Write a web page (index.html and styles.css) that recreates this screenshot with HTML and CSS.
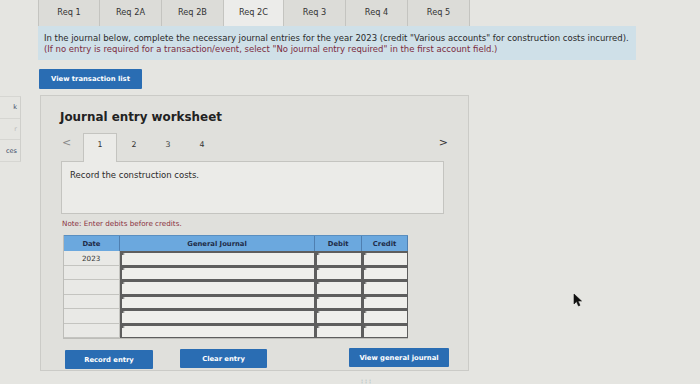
FILE: index.html
```html
<!DOCTYPE html>
<html>
<head>
<meta charset="utf-8">
<link rel="stylesheet" href="styles.css">
</head>
<body>
<div class="page">
  <div class="top">
    <div class="tabs">
      <div class="tab">Req 1</div>
      <div class="tab">Req 2A</div>
      <div class="tab">Req 2B</div>
      <div class="tab active">Req 2C</div>
      <div class="tab">Req 3</div>
      <div class="tab">Req 4</div>
      <div class="tab">Req 5</div>
    </div>
    <div class="instructions">
      <p class="line1">In the journal below, complete the necessary journal entries for the year 2023 (credit "Various accounts" for construction costs incurred).</p>
      <p class="line2">(If no entry is required for a transaction/event, select "No journal entry required" in the first account field.)</p>
    </div>
    <button class="btn btn-view">View transaction list</button>
  </div>

  <div class="lower">
    <div class="sidebar">
      <div class="side-item">k</div>
      <div class="side-item">r</div>
      <div class="side-item">ces</div>
    </div>

    <div class="panel">
      <h1 class="title">Journal entry worksheet</h1>
      <div class="pager">
        <span class="arrow">&lt;</span>
        <div class="ptab active">1</div>
        <div class="ptab">2</div>
        <div class="ptab">3</div>
        <div class="ptab">4</div>
        <span class="arrow right">&gt;</span>
      </div>
      <div class="content">Record the construction costs.</div>
      <div class="note">Note: Enter debits before credits.</div>

      <div class="table">
        <div class="row head">
          <div class="c date">Date</div>
          <div class="c gj">General Journal</div>
          <div class="c dr">Debit</div>
          <div class="c cr">Credit</div>
        </div>
        <div class="row"><div class="c date">2023</div><div class="c in gj"></div><div class="c in dr"></div><div class="c in cr"></div></div>
        <div class="row"><div class="c date"></div><div class="c in gj"></div><div class="c in dr"></div><div class="c in cr"></div></div>
        <div class="row"><div class="c date"></div><div class="c in gj"></div><div class="c in dr"></div><div class="c in cr"></div></div>
        <div class="row"><div class="c date"></div><div class="c in gj"></div><div class="c in dr"></div><div class="c in cr"></div></div>
        <div class="row"><div class="c date"></div><div class="c in gj"></div><div class="c in dr"></div><div class="c in cr"></div></div>
        <div class="row"><div class="c date"></div><div class="c in gj"></div><div class="c in dr"></div><div class="c in cr"></div></div>
      </div>

      <div class="actions">
        <button class="btn btn-record">Record entry</button>
        <button class="btn btn-clear">Clear entry</button>
        <button class="btn btn-general">View general journal</button>
      </div>
    </div>
  </div>
  <div class="dots">&#8942;&#8942;&#8942;</div>
</div>
<svg class="cursor" width="10" height="14" viewBox="0 0 10 14"><path d="M1 1 L1 11 L3.5 8.5 L5.5 13 L7 12.3 L5 8 L8.5 8 Z" fill="#111" stroke="#111" stroke-width="0.6"/></svg>
</body>
</html>
```

FILE: styles.css
```css
* { box-sizing: border-box; }
html, body { margin: 0; padding: 0; }
body {
  width: 700px;
  height: 384px;
  overflow: hidden;
  background: #e5e5e1;
  font-family: "DejaVu Sans", Verdana, sans-serif;
  color: #2c2c2c;
  position: relative;
}
.page { width: 700px; height: 384px; }
.top { padding-left: 38px; }
.tabs { display: flex; height: 26px; }
.tab {
  width: 62px;
  height: 26px;
  background: #dcdcd8;
  border-right: 1px solid #c4c4c0;
  font-size: 8.2px;
  display: flex;
  align-items: center;
  justify-content: center;
  padding-bottom: 3px;
  color: #333;
}
.tab:first-child { border-left: 1px solid #c4c4c0; }
.tab.active { background: #ececea; width: 60px; }
.instructions {
  width: 598px;
  background: #cfe0e8;
  padding: 7px 4px 5px 6px;
  font-size: 8.5px;
  line-height: 11px;
}
.instructions p { margin: 0; white-space: nowrap; }
.line1 { color: #2a2a2a; }
.line2 { color: #7c2c3e; }
.btn {
  display: block;
  border: none;
  background: #2a6db3;
  color: #fff;
  font-family: "DejaVu Sans", Verdana, sans-serif;
  font-weight: bold;
  font-size: 6.8px;
  padding: 0;
  border-radius: 1px;
}
.btn-view { margin: 9px 0 0 1px; width: 103px; height: 20px; }

.lower { display: flex; margin-top: 6px; }
.sidebar {
  width: 21px;
  height: 66px;
  border-right: 1px solid #cfcfcb;
  border-top: 1px solid #d6d6d2;
  border-bottom: 1px solid #d6d6d2;
  display: flex;
  flex-direction: column;
  margin-top: 1px;
}
.side-item {
  flex: 1;
  font-size: 6.5px;
  color: #3d4c66;
  display: flex;
  align-items: center;
  justify-content: flex-end;
  padding-right: 3px;
  border-bottom: 1px solid #d6d6d2;
}
.side-item:nth-child(2) { color: #bbb; }
.side-item:last-child { border-bottom: none; }

.panel {
  margin-left: 19px;
  width: 429px;
  height: 276px;
  background: #e0e0dc;
  border: 1px solid #cbcbc7;
  padding: 0 0 0 20px;
  display: flex;
  flex-direction: column;
}
.title {
  margin: 13px 0 0 -1px;
  font-size: 11.9px;
  font-weight: bold;
  color: #222;
  height: 16px;
  line-height: 16px;
}
.pager {
  display: flex;
  align-items: flex-end;
  margin-top: 8px;
  height: 28px;
}
.arrow {
  font-size: 11px;
  color: #888;
  width: 22px;
  padding-left: 1px;
  align-self: flex-start;
  padding-top: 3px;
}
.arrow.right { margin-left: auto; width: auto; padding: 3px 20px 0 0; color: #333; }
.ptab {
  width: 34px;
  height: 28px;
  font-size: 7.8px;
  display: flex;
  align-items: flex-start;
  justify-content: center;
  padding-top: 6px;
  color: #333;
  border: 1px solid transparent;
  border-bottom: none;
}
.ptab.active {
  background: #ebebe8;
  border-color: #c4c4c0;
  margin-bottom: -1px;
  height: 29px;
  position: relative;
  z-index: 1;
}
.content {
  width: 383px;
  height: 53px;
  background: #ebebe8;
  border: 1px solid #c4c4c0;
  font-size: 8.5px;
  padding: 8px 8px;
  color: #2a2a2a;
}
.note {
  margin-top: 5px;
  font-size: 7.2px;
  color: #8a3040;
  padding-left: 1px;
}
.table {
  margin: 7px 0 0 2px;
  width: 345px;
  display: flex;
  flex-direction: column;
  border-left: 1px solid #bdbdb9;
  border-bottom: 1px solid #bdbdb9;
}
.row { display: flex; height: 14.5px; }
.row.head {
  height: 16px;
  background: #6ba8de;
  border-top: 1px solid #5a8fc0;
}
.c { height: 100%; }
.date { width: 56px; }
.gj { width: 196px; }
.dr { width: 47px; }
.cr { width: 46px; }
.head .c {
  display: flex;
  align-items: center;
  justify-content: center;
  font-size: 6.8px;
  font-weight: bold;
  color: #1e2c48;
  border-right: 1px solid #4f7fb0;
}
.row .date {
  background: #e9e9e6;
  border-right: 1px solid #c4c4c0;
  border-bottom: 1px solid #c4c4c0;
}
.head .date { background: transparent; border-bottom: none; border-right: 1px solid #4f7fb0; }
.row:not(.head) .date {
  font-size: 7.2px;
  color: #333;
  padding: 3px 0 0 18px;
}
.in {
  background: #efefec;
  border: 1px solid #5e5e5e;
  border-top-width: 2px;
  border-left-width: 2px;
  position: relative;
}
.in::before {
  content: "";
  position: absolute;
  left: 0;
  top: 0;
  border-left: 3px solid #444;
  border-top: 1.5px solid transparent;
  border-bottom: 1.5px solid transparent;
}
.actions {
  display: flex;
  align-items: flex-start;
  margin-top: 10px;
  padding-left: 4px;
}
.btn-record { width: 88px; height: 19px; margin-top: 1px; }
.btn-clear { width: 87px; height: 19px; margin-left: 27px; }
.btn-general { width: 100px; height: 19px; margin-left: 82px; margin-top: -1px; }

.dots {
  position: absolute;
  left: 359px;
  top: 378px;
  font-size: 6px;
  color: #7a8aa0;
  letter-spacing: -2px;
}
.cursor { position: absolute; left: 573px; top: 293px; }
```
